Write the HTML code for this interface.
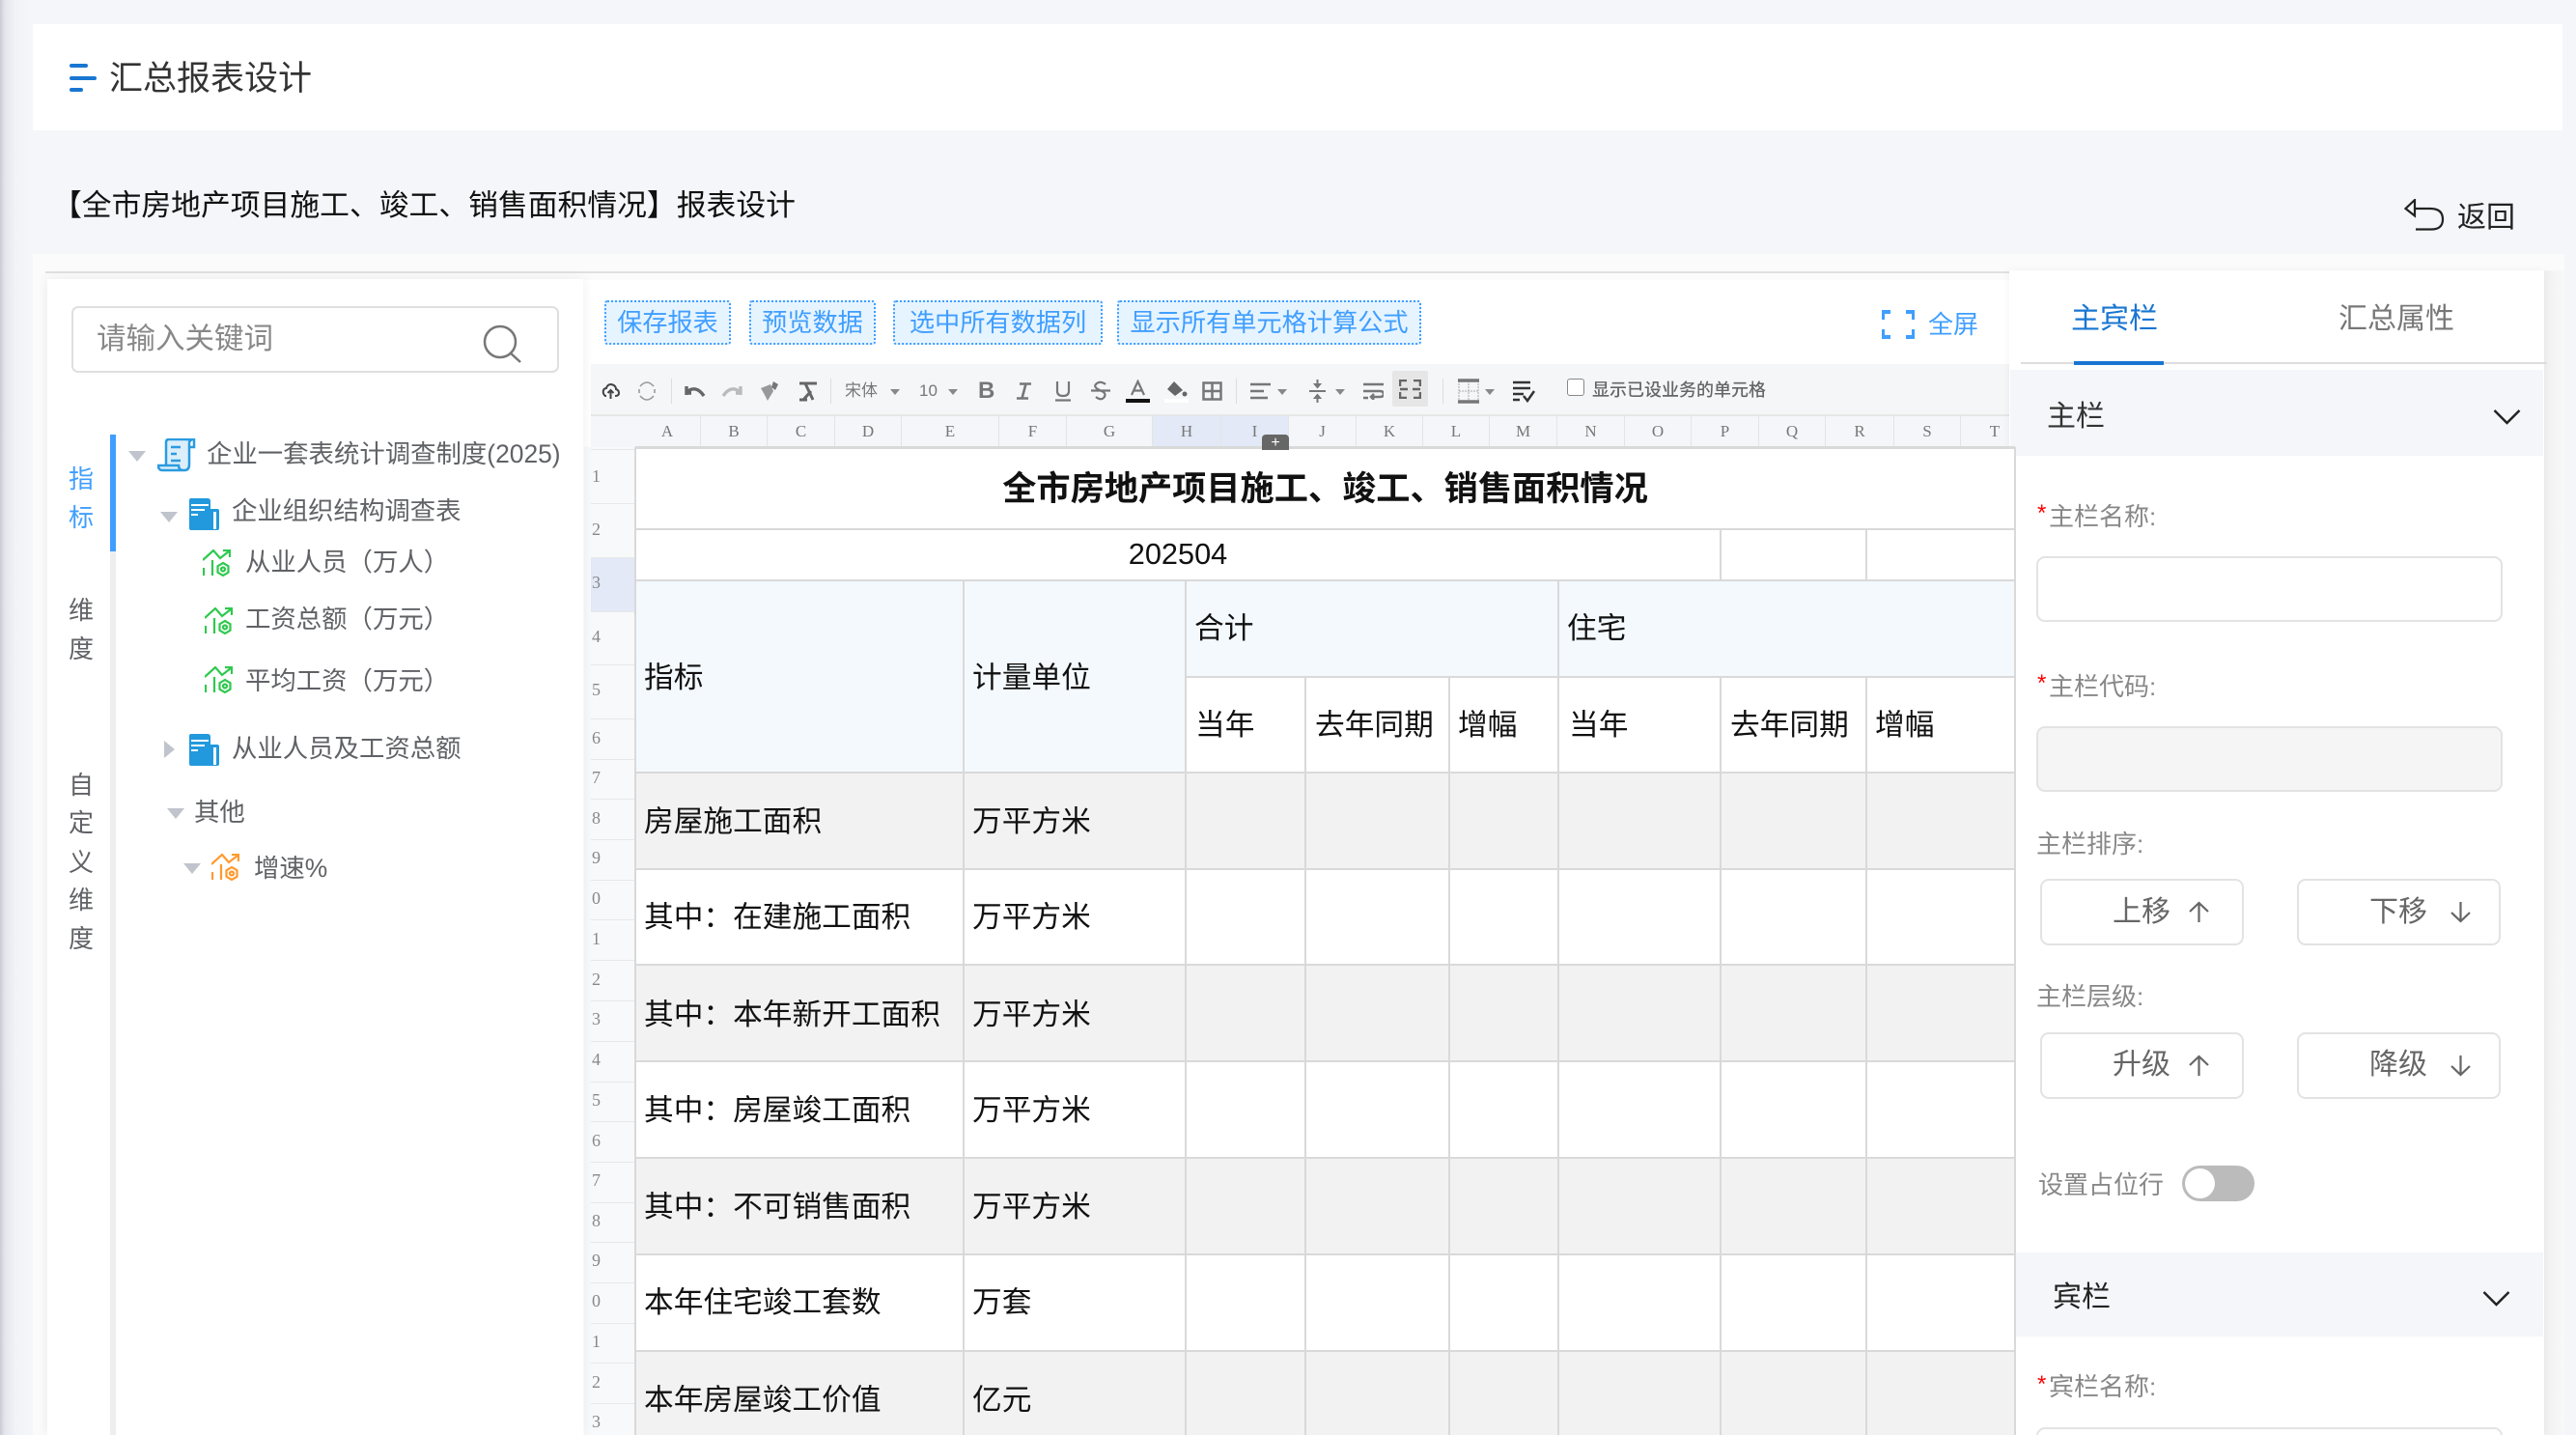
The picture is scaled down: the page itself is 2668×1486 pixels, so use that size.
<!DOCTYPE html>
<html lang="zh-CN"><head><meta charset="utf-8"><title>汇总报表设计</title>
<style>
*{box-sizing:border-box;margin:0;padding:0}
html,body{width:2668px;height:1486px;overflow:hidden;background:#f4f6fa}
body{position:relative;font-family:"Liberation Sans","Noto Sans CJK SC",sans-serif}
.a,.t,.v,.h,svg{position:absolute}
.t{white-space:nowrap;line-height:40px;height:40px;margin-top:2px}
.h{background:#d9d9d9;height:2px}
.v{background:#d9d9d9;width:2px}
.btn{position:absolute;top:311px;height:46px;border:2px dotted #409eff;background:#e6f4ff;border-radius:3px;color:#409eff;font-size:26.2px;line-height:43px;text-align:center;white-space:nowrap}
.c{position:absolute;top:431px;height:32px;font:17px/32px "Liberation Serif",serif;color:#777;text-align:center;border-right:1px solid #e4e4e4}
.r{position:absolute;left:613px;font:18px/20px "Liberation Serif",serif;color:#888}
.s{position:absolute;left:612px;width:46px;height:1px;background:#e8e8e8}
.td{color:#111;font-size:30.7px}
.lab{color:#888;font-size:26px;margin-top:1px}
.tree{color:#606266;font-size:26.4px;margin-top:0}
.tab{color:#606266;font-size:26px;left:71px;width:26px;text-align:center;margin-top:0}
.mv{position:absolute;width:211px;height:69px;border:2px solid #e3e3e3;border-radius:9px;background:#fff}
.mvt{color:#666;font-size:30px;margin-top:1px}
.tb{color:#777;font-size:17px;margin-top:0}
.car{position:absolute;width:0;height:0;border-left:5px solid transparent;border-right:5px solid transparent;border-top:6px solid #888;top:403px}
.sep{position:absolute;top:392px;width:1px;height:26px;background:#ddd}
</style></head><body>

<!-- page chrome -->
<div class="a" style="left:0;top:0;width:34px;height:1486px;background:linear-gradient(90deg,#c9ccd3 0,#e4e6ec 5px,#f1f3f7 16px,#f4f6fa 34px)"></div>
<div class="a" style="left:34px;top:25px;width:2620px;height:110px;background:#fff"></div>
<svg style="left:72px;top:66px" width="28" height="30"><rect x="0" y="0" width="19" height="4" rx="2" fill="#1976d2"/><rect x="0" y="13" width="28" height="4" rx="2" fill="#1976d2"/><rect x="0" y="25" width="14" height="4" rx="2" fill="#1976d2"/></svg>
<div class="t" style="left:113px;top:60px;font-size:35px;color:#333">汇总报表设计</div>
<div class="t" style="left:54px;top:191px;font-size:30.8px;color:#111">【全市房地产项目施工、竣工、销售面积情况】报表设计</div>
<svg style="left:2490px;top:206px" width="42" height="33" fill="none" stroke="#222" stroke-width="2.2"><path d="M11 1 1.500 10 11 17.500V1Z"/><path d="M11 10H27Q40 10 40 21T27 31.500H12"/></svg>
<div class="t" style="left:2545px;top:204px;font-size:30px;color:#222">返回</div>

<!-- main white panel -->
<div class="a" style="left:34px;top:263px;width:2622px;height:1223px;background:#fbfbfc"></div>
<div class="a" style="left:47px;top:281px;width:2603px;height:2px;background:#e0e0e0"></div>

<!-- spreadsheet area -->
<div class="a" style="left:604px;top:290px;width:1480px;height:1196px;background:#fff"></div>
<div class="btn" style="left:626px;width:131px">保存报表</div>
<div class="btn" style="left:776px;width:131px">预览数据</div>
<div class="btn" style="left:925px;width:217px">选中所有数据列</div>
<div class="btn" style="left:1157px;width:315px">显示所有单元格计算公式</div>
<svg style="left:1949px;top:321px" width="34" height="30" fill="none" stroke="#409eff" stroke-width="4"><path d="M1 10V2H9M25 2H33V10M1 20V28H9M25 28H33V20"/></svg>
<div class="t" style="left:1997px;top:314px;font-size:26px;color:#409eff">全屏</div>

<!-- toolbar -->
<div class="a" style="left:612px;top:377px;width:1470px;height:54px;background:#f5f6f8;border-bottom:2px solid #e6e6e6"></div>
<svg style="left:623px;top:396px" width="19" height="18" fill="none" stroke="#444" stroke-width="2"><path d="M5 14H4Q1 12 2 8 3 6 5 6 6 2 10 2 15 3 15 7 18 8 18 11 18 14 14 14"/><path d="M9.500 17V8M6.500 11l3-3 3 3"/></svg>
<svg style="left:660px;top:394px" width="20" height="22" fill="none" stroke="#999" stroke-width="1.600"><path d="M3 6Q10-2 17 6M17 16Q10 24 3 16M2 9v4M18 9v4" /></svg>
<div class="sep" style="left:695px"></div>
<svg style="left:708px;top:397px" width="23" height="16" fill="none" stroke="#666" stroke-width="3.400"><path d="M3 12V3M2 10H8M3 9Q13 1 21 13"/></svg>
<svg style="left:747px;top:397px" width="23" height="16" fill="none" stroke="#bbb" stroke-width="3.400"><path d="M20 12V3M21 10H15M20 9Q10 1 2 13"/></svg>
<svg style="left:787px;top:394px" width="20" height="22"><path d="M1 8 11 4l3 7-6 10-3-6-4-7Z" fill="#999"/><path d="M14 1l5 3-3 6-4-3Z" fill="#777"/></svg>
<svg style="left:826px;top:394px" width="22" height="22" fill="none" stroke="#666" stroke-width="3"><path d="M2 3H20M8 3l8 17M14 11 6 20M2 20h8"/></svg>
<div class="sep" style="left:860px"></div>
<div class="t tb" style="left:875px;top:385px">宋体</div><div class="car" style="left:922px"></div>
<div class="t tb" style="left:952px;top:385px">10</div><div class="car" style="left:982px"></div>
<div class="t" style="left:1013px;top:383px;font-size:24px;font-weight:700;color:#777">B</div>
<svg style="left:1052px;top:396px" width="17" height="18" fill="none" stroke="#777" stroke-width="2.600"><path d="M4 1.500H16M1 16.500H13M10.500 1.500 6.500 16.500"/></svg>
<svg style="left:1092px;top:394px" width="18" height="22" fill="none" stroke="#777" stroke-width="2.200"><path d="M3 1V11Q3 16 9 16T15 11V1M1 20.500H17"/></svg>
<svg style="left:1130px;top:394px" width="20" height="22" fill="none" stroke="#777" stroke-width="2.200"><path d="M15 4Q10 0 6 3T7 9L13 12Q16 15 13 18T5 17M0 10.500H20"/></svg>
<svg style="left:1166px;top:393px" width="25" height="24"><path d="M6 16 12.500 2 19 16M8 11.500H17" fill="none" stroke="#777" stroke-width="2.200"/><rect x="0" y="20" width="25" height="4" fill="#111"/></svg>
<svg style="left:1206px;top:393px" width="25" height="24"><path d="M10 2 19 11 11 17 3 10Z" fill="#666"/><circle cx="21" cy="15" r="2.500" fill="#666"/><rect x="0" y="20" width="25" height="4" fill="#fff"/></svg>
<svg style="left:1245px;top:395px" width="21" height="20" fill="none" stroke="#777" stroke-width="2.500"><rect x="1.500" y="1.500" width="18" height="17"/><path d="M10.500 1V19M1 10H20"/></svg>
<div class="sep" style="left:1280px"></div>
<svg style="left:1295px;top:396px" width="21" height="18" stroke="#777" stroke-width="2.500"><path d="M0 2H21M0 9H14M0 16H18"/></svg><div class="car" style="left:1323px"></div>
<svg style="left:1356px;top:393px" width="17" height="24" fill="#777" stroke="#777" stroke-width="2"><path d="M0 12H17M8.500 0V6M8.500 18V24M6 5h5l-2.500 3zM6 19h5l-2.500-3z"/></svg><div class="car" style="left:1383px"></div>
<svg style="left:1412px;top:396px" width="21" height="18" fill="none" stroke="#777" stroke-width="2.500"><path d="M0 2H21M0 9H17Q21 9 21 12T17 15H9M11 12l-3 3 3 3M0 16H5"/></svg>
<div class="a" style="left:1442px;top:384px;width:37px;height:37px;background:#e6e6e6;border-radius:2px"></div>
<svg style="left:1449px;top:393px" width="23" height="20" fill="none" stroke="#666" stroke-width="2.500"><path d="M8 1H1V7M15 1H22V7M1 13V19H8M22 13V19H15M1 10H9M14 10H22"/></svg>
<div class="sep" style="left:1494px"></div>
<svg style="left:1510px;top:392px" width="22" height="26" fill="none" stroke="#777"><path d="M1 2V24M21 2V24M11 2V24M1 13H21" stroke-width="1" stroke="#aaa" stroke-dasharray="2 1"/><path d="M0 2H22M0 24H22" stroke-width="3.500"/></svg><div class="car" style="left:1538px"></div>
<svg style="left:1566px;top:394px" width="24" height="23" fill="none" stroke="#333" stroke-width="2.500"><path d="M1 2H19M1 8H19M1 14H12M1 20H8M12 16l4 5 7-10"/></svg>
<div class="a" style="left:1623px;top:392px;width:18px;height:18px;border:1.500px solid #888;border-radius:3px;background:#fff"></div>
<div class="t" style="left:1649px;top:382px;font-size:18px;font-weight:500;color:#666">显示已设业务的单元格</div>

<!-- column headers -->
<div class="a" style="left:612px;top:431px;width:1470px;height:32px;background:#f5f6f9"></div>
<div class="a" style="left:1194px;top:431px;width:141px;height:32px;background:#e3e9f6"></div>
<div class="c" style="left:657px;width:69px">A</div><div class="c" style="left:726px;width:69px">B</div><div class="c" style="left:795px;width:70px">C</div><div class="c" style="left:865px;width:69px">D</div><div class="c" style="left:934px;width:101px">E</div><div class="c" style="left:1035px;width:70px">F</div><div class="c" style="left:1105px;width:89px">G</div><div class="c" style="left:1194px;width:71px">H</div><div class="c" style="left:1265px;width:70px">I</div><div class="c" style="left:1335px;width:70px">J</div><div class="c" style="left:1405px;width:69px">K</div><div class="c" style="left:1474px;width:69px">L</div><div class="c" style="left:1543px;width:70px">M</div><div class="c" style="left:1613px;width:70px">N</div><div class="c" style="left:1683px;width:69px">O</div><div class="c" style="left:1752px;width:70px">P</div><div class="c" style="left:1822px;width:69px">Q</div><div class="c" style="left:1891px;width:71px">R</div><div class="c" style="left:1962px;width:69px">S</div><div class="c" style="left:2031px;width:70px;border:0">T</div>

<!-- row headers -->
<div class="a" style="left:605px;top:463px;width:53px;height:1023px;background:#f8f9fb"></div>
<div class="a" style="left:612px;top:577px;width:46px;height:56px;background:#e3e9f6"></div>
<div class="s" style="top:465px"></div><div class="s" style="top:521px"></div><div class="s" style="top:577px"></div><div class="s" style="top:633px"></div><div class="s" style="top:688px"></div><div class="s" style="top:744px"></div><div class="s" style="top:786px"></div><div class="s" style="top:827px"></div><div class="s" style="top:869px"></div><div class="s" style="top:911px"></div><div class="s" style="top:952px"></div><div class="s" style="top:994px"></div><div class="s" style="top:1036px"></div><div class="s" style="top:1078px"></div><div class="s" style="top:1120px"></div><div class="s" style="top:1161px"></div><div class="s" style="top:1203px"></div><div class="s" style="top:1245px"></div><div class="s" style="top:1286px"></div><div class="s" style="top:1328px"></div><div class="s" style="top:1370px"></div><div class="s" style="top:1411px"></div><div class="s" style="top:1453px"></div>
<div class="r" style="top:483px">1</div><div class="r" style="top:538px">2</div><div class="r" style="top:593px">3</div><div class="r" style="top:649px">4</div><div class="r" style="top:704px">5</div><div class="r" style="top:754px">6</div><div class="r" style="top:795px">7</div><div class="r" style="top:837px">8</div><div class="r" style="top:878px">9</div><div class="r" style="top:920px">0</div><div class="r" style="top:962px">1</div><div class="r" style="top:1004px">2</div><div class="r" style="top:1045px">3</div><div class="r" style="top:1087px">4</div><div class="r" style="top:1129px">5</div><div class="r" style="top:1171px">6</div><div class="r" style="top:1212px">7</div><div class="r" style="top:1254px">8</div><div class="r" style="top:1295px">9</div><div class="r" style="top:1337px">0</div><div class="r" style="top:1379px">1</div><div class="r" style="top:1421px">2</div><div class="r" style="top:1462px">3</div>

<!-- sidebar -->
<div class="a" style="left:49px;top:289px;width:555px;height:1197px;background:#fff;box-shadow:0 0 12px rgba(0,0,0,.07)"></div>
<div class="a" style="left:74px;top:317px;width:505px;height:69px;border:2px solid #dfdfdf;border-radius:7px;background:#fff"></div>
<div class="t" style="left:100px;top:329px;font-size:30.5px;color:#888">请输入关键词</div>
<svg style="left:499px;top:336px" width="42" height="40" fill="none" stroke="#777" stroke-width="2.500"><circle cx="19" cy="18" r="16"/><path d="M29 29 40 39"/></svg>
<div class="a" style="left:114px;top:450px;width:6px;height:1036px;background:#eee"></div>
<div class="a" style="left:114px;top:450px;width:6px;height:121px;background:#409eff"></div>
<div class="t tab" style="top:476px;color:#409eff">指</div>
<div class="t tab" style="top:516px;color:#409eff">标</div>
<div class="t tab" style="top:612px">维</div><div class="t tab" style="top:652px">度</div>
<div class="t tab" style="top:793px">自</div><div class="t tab" style="top:832px">定</div><div class="t tab" style="top:873px">义</div><div class="t tab" style="top:912px">维</div><div class="t tab" style="top:952px">度</div>

<svg style="left:133px;top:467px" width="18" height="11"><path d="M0 0H18L9 11Z" fill="#c0c4cc"/></svg>
<svg style="left:163px;top:454px" width="40" height="35" fill="none" stroke="#2a9be0" stroke-width="2.500"><path d="M9 28V4Q9 1 12 1H38Q33 1 33 5V27Q33 33 28 33H5Q1 33 1 28H22Q22 33 27 33" fill="#dbeefa"/><path d="M30 1H38V9H33"/><path d="M14 9H24M14 16H20M14 23H24"/></svg>
<div class="t tree" style="left:214px;top:450px">企业一套表统计调查制度(2025)</div>

<svg style="left:166px;top:530px" width="18" height="11"><path d="M0 0H18L9 11Z" fill="#c0c4cc"/></svg>
<svg style="left:196px;top:516px" width="31" height="33"><path d="M2 0H19Q22 0 22 3V11H29Q31 11 31 13V31Q31 33 29 33H2Q0 33 0 31V2Q0 0 2 0Z" fill="#2299dd"/><rect x="25" y="14" width="3" height="18" fill="#fff"/><rect x="2" y="6" width="18" height="2" fill="#fff"/><rect x="2" y="11" width="14" height="2" fill="#fff"/><rect x="2" y="16" width="7" height="2" fill="#fff"/></svg>
<div class="t tree" style="left:240px;top:509px">企业组织结构调查表</div>

<svg style="left:210px;top:569px" width="29" height="28" fill="none" stroke="#2fc94e" stroke-width="2.200"><path d="M0 11 11 1 18 9 27 2M21 1H28V8"/><path d="M1 19V27M10 11V27"/><circle cx="21" cy="20.500" r="2"/><path d="M21 14 26.500 17.200V23.800L21 27 15.500 23.800V17.200Z"/></svg>
<div class="t tree" style="left:254px;top:562px">从业人员（万人）</div>
<svg style="left:212px;top:629px" width="29" height="28" fill="none" stroke="#2fc94e" stroke-width="2.200"><path d="M0 11 11 1 18 9 27 2M21 1H28V8"/><path d="M1 19V27M10 11V27"/><circle cx="21" cy="20.500" r="2"/><path d="M21 14 26.500 17.200V23.800L21 27 15.500 23.800V17.200Z"/></svg>
<div class="t tree" style="left:254px;top:621px">工资总额（万元）</div>
<svg style="left:212px;top:690px" width="29" height="28" fill="none" stroke="#2fc94e" stroke-width="2.200"><path d="M0 11 11 1 18 9 27 2M21 1H28V8"/><path d="M1 19V27M10 11V27"/><circle cx="21" cy="20.500" r="2"/><path d="M21 14 26.500 17.200V23.800L21 27 15.500 23.800V17.200Z"/></svg>
<div class="t tree" style="left:254px;top:685px">平均工资（万元）</div>

<svg style="left:170px;top:767px" width="11" height="18"><path d="M0 0V18L11 9Z" fill="#c0c4cc"/></svg>
<svg style="left:196px;top:760px" width="31" height="33"><path d="M2 0H19Q22 0 22 3V11H29Q31 11 31 13V31Q31 33 29 33H2Q0 33 0 31V2Q0 0 2 0Z" fill="#2299dd"/><rect x="25" y="14" width="3" height="18" fill="#fff"/><rect x="2" y="6" width="18" height="2" fill="#fff"/><rect x="2" y="11" width="14" height="2" fill="#fff"/><rect x="2" y="16" width="7" height="2" fill="#fff"/></svg>
<div class="t tree" style="left:240px;top:755px">从业人员及工资总额</div>

<svg style="left:173px;top:837px" width="18" height="11"><path d="M0 0H18L9 11Z" fill="#c0c4cc"/></svg>
<div class="t tree" style="left:201px;top:821px">其他</div>
<svg style="left:190px;top:894px" width="18" height="11"><path d="M0 0H18L9 11Z" fill="#c0c4cc"/></svg>
<svg style="left:219px;top:884px" width="29" height="28" fill="none" stroke="#ff9a2e" stroke-width="2.200"><path d="M0 11 11 1 18 9 27 2M21 1H28V8"/><path d="M1 19V27M10 11V27"/><circle cx="21" cy="20.500" r="2"/><path d="M21 14 26.500 17.200V23.800L21 27 15.500 23.800V17.200Z"/></svg>
<div class="t tree" style="left:263px;top:879px">增速%</div>

<!-- right panel -->
<div class="a" style="left:2635px;top:280px;width:21px;height:1206px;background:linear-gradient(90deg,#f0f0f1,#f9f9fa)"></div>
<div class="a" style="left:2081px;top:280px;width:554px;height:1206px;background:#fff;box-shadow:0 0 8px rgba(0,0,0,.05)"></div>
<div class="t" style="left:2145px;top:309px;font-size:30px;color:#1976d2">主宾栏</div>
<div class="t" style="left:2422px;top:309px;font-size:30px;color:#777">汇总属性</div>
<div class="a" style="left:2093px;top:375px;width:545px;height:2px;background:#ddd"></div>
<div class="a" style="left:2148px;top:374px;width:93px;height:4px;background:#1976d2"></div>
<div class="a" style="left:2082px;top:383px;width:552px;height:89px;background:#f4f6fa"></div>
<div class="t" style="left:2120px;top:410px;font-size:30px;color:#333">主栏</div>
<svg style="left:2582px;top:423px" width="29" height="18" fill="none" stroke="#222" stroke-width="2.500"><path d="M1.500 2 14.500 15 27.500 2"/></svg>

<div class="t lab" style="left:2122px;top:514px">主栏名称:</div>
<div class="t" style="left:2110px;top:510px;font-size:24px;color:#f00">*</div>
<div class="a" style="left:2109px;top:576px;width:483px;height:68px;border:2px solid #e3e3e3;border-radius:9px;background:#fff"></div>
<div class="t lab" style="left:2122px;top:690px">主栏代码:</div>
<div class="t" style="left:2110px;top:686px;font-size:24px;color:#f00">*</div>
<div class="a" style="left:2109px;top:752px;width:483px;height:68px;border:2px solid #e3e3e3;border-radius:9px;background:#f5f5f5"></div>

<div class="t lab" style="left:2109px;top:853px">主栏排序:</div>
<div class="mv" style="left:2113px;top:910px"></div>
<div class="mv" style="left:2379px;top:910px"></div>
<div class="t mvt" style="left:2188px;top:924px">上移</div>
<svg style="left:2266px;top:933px" width="23" height="23" fill="none" stroke="#666" stroke-width="2.200"><path d="M11.500 22V2M2 11 11.500 2 21 11"/></svg>
<div class="t mvt" style="left:2454px;top:924px">下移</div>
<svg style="left:2537px;top:933px" width="23" height="23" fill="none" stroke="#666" stroke-width="2.200"><path d="M11.500 1V21M2 12 11.500 21 21 12"/></svg>

<div class="t lab" style="left:2109px;top:1011px">主栏层级:</div>
<div class="mv" style="left:2113px;top:1069px"></div>
<div class="mv" style="left:2379px;top:1069px"></div>
<div class="t mvt" style="left:2188px;top:1082px">升级</div>
<svg style="left:2266px;top:1092px" width="23" height="23" fill="none" stroke="#666" stroke-width="2.200"><path d="M11.500 22V2M2 11 11.500 2 21 11"/></svg>
<div class="t mvt" style="left:2454px;top:1082px">降级</div>
<svg style="left:2537px;top:1092px" width="23" height="23" fill="none" stroke="#666" stroke-width="2.200"><path d="M11.500 1V21M2 12 11.500 21 21 12"/></svg>

<div class="t lab" style="left:2111px;top:1206px">设置占位行</div>
<div class="a" style="left:2260px;top:1207px;width:75px;height:37px;background:#bbb;border-radius:19px"></div>
<div class="a" style="left:2263px;top:1210px;width:31px;height:31px;background:#fff;border-radius:50%"></div>

<div class="a" style="left:2082px;top:1297px;width:552px;height:87px;background:#f4f6fa"></div>
<div class="t" style="left:2126px;top:1322px;font-size:30px;color:#222">宾栏</div>
<svg style="left:2571px;top:1336px" width="29" height="18" fill="none" stroke="#222" stroke-width="2.500"><path d="M1.500 2 14.500 15 27.500 2"/></svg>
<div class="t lab" style="left:2122px;top:1415px">宾栏名称:</div>
<div class="t" style="left:2110px;top:1412px;font-size:24px;color:#f00">*</div>
<div class="a" style="left:2109px;top:1478px;width:483px;height:68px;border:2px solid #e3e3e3;border-radius:9px;background:#fff"></div>

<!-- table -->
<div class="a" style="left:658px;top:463px;width:1429px;height:1023px;background:#fff"></div>
<div class="a" style="left:658px;top:601px;width:569px;height:199px;background:#f4f9fd"></div>
<div class="a" style="left:1227px;top:601px;width:860px;height:100px;background:#f4f9fd"></div>
<div class="a" style="left:658px;top:800px;width:1429px;height:100px;background:#f2f2f2"></div>
<div class="a" style="left:658px;top:999px;width:1429px;height:100px;background:#f2f2f2"></div>
<div class="a" style="left:658px;top:1199px;width:1429px;height:100px;background:#f2f2f2"></div>
<div class="a" style="left:658px;top:1398px;width:1429px;height:88px;background:#f2f2f2"></div>

<div class="h" style="left:658px;top:462px;width:1429px;height:3px"></div>
<div class="h" style="left:658px;top:547px;width:1429px"></div>
<div class="h" style="left:658px;top:600px;width:1429px"></div>
<div class="h" style="left:1227px;top:700px;width:860px"></div>
<div class="h" style="left:658px;top:799px;width:1429px"></div>
<div class="h" style="left:658px;top:899px;width:1429px"></div>
<div class="h" style="left:658px;top:998px;width:1429px"></div>
<div class="h" style="left:658px;top:1098px;width:1429px"></div>
<div class="h" style="left:658px;top:1198px;width:1429px"></div>
<div class="h" style="left:658px;top:1298px;width:1429px"></div>
<div class="h" style="left:658px;top:1398px;width:1429px"></div>
<div class="v" style="left:657px;top:463px;height:1023px"></div>
<div class="v" style="left:2086px;top:463px;height:1023px"></div>
<div class="v" style="left:997px;top:601px;height:885px"></div>
<div class="v" style="left:1227px;top:601px;height:885px"></div>
<div class="v" style="left:1351px;top:701px;height:785px"></div>
<div class="v" style="left:1500px;top:701px;height:785px"></div>
<div class="v" style="left:1613px;top:601px;height:885px"></div>
<div class="v" style="left:1781px;top:548px;height:53px"></div>
<div class="v" style="left:1932px;top:548px;height:53px"></div>
<div class="v" style="left:1781px;top:701px;height:785px"></div>
<div class="v" style="left:1932px;top:701px;height:785px"></div>

<div class="a" style="left:1307px;top:450px;width:28px;height:16px;background:#666;border-radius:4px 4px 0 0;color:#fff;font-size:16px;line-height:18px;text-align:center;overflow:hidden">+</div>

<div class="t" style="left:658px;width:1429px;top:485px;text-align:center;font-size:35.2px;font-weight:700;color:#111">全市房地产项目施工、竣工、销售面积情况</div>
<div class="t td" style="left:658px;width:1124px;top:552px;text-align:center">202504</div>
<div class="t td" style="left:667px;top:680px">指标</div>
<div class="t td" style="left:1007px;top:680px">计量单位</div>
<div class="t td" style="left:1237px;top:629px">合计</div>
<div class="t td" style="left:1623px;top:629px">住宅</div>
<div class="t td" style="left:1238px;top:729px">当年</div>
<div class="t td" style="left:1362px;top:729px">去年同期</div>
<div class="t td" style="left:1510px;top:729px">增幅</div>
<div class="t td" style="left:1625px;top:729px">当年</div>
<div class="t td" style="left:1792px;top:729px">去年同期</div>
<div class="t td" style="left:1942px;top:729px">增幅</div>

<div class="t td" style="left:667px;top:829px">房屋施工面积</div><div class="t td" style="left:1007px;top:829px">万平方米</div>
<div class="t td" style="left:667px;top:928px">其中：在建施工面积</div><div class="t td" style="left:1007px;top:928px">万平方米</div>
<div class="t td" style="left:667px;top:1029px">其中：本年新开工面积</div><div class="t td" style="left:1007px;top:1029px">万平方米</div>
<div class="t td" style="left:667px;top:1128px">其中：房屋竣工面积</div><div class="t td" style="left:1007px;top:1128px">万平方米</div>
<div class="t td" style="left:667px;top:1228px">其中：不可销售面积</div><div class="t td" style="left:1007px;top:1228px">万平方米</div>
<div class="t td" style="left:667px;top:1327px">本年住宅竣工套数</div><div class="t td" style="left:1007px;top:1327px">万套</div>
<div class="t td" style="left:667px;top:1428px">本年房屋竣工价值</div><div class="t td" style="left:1007px;top:1428px">亿元</div>
</body></html>
